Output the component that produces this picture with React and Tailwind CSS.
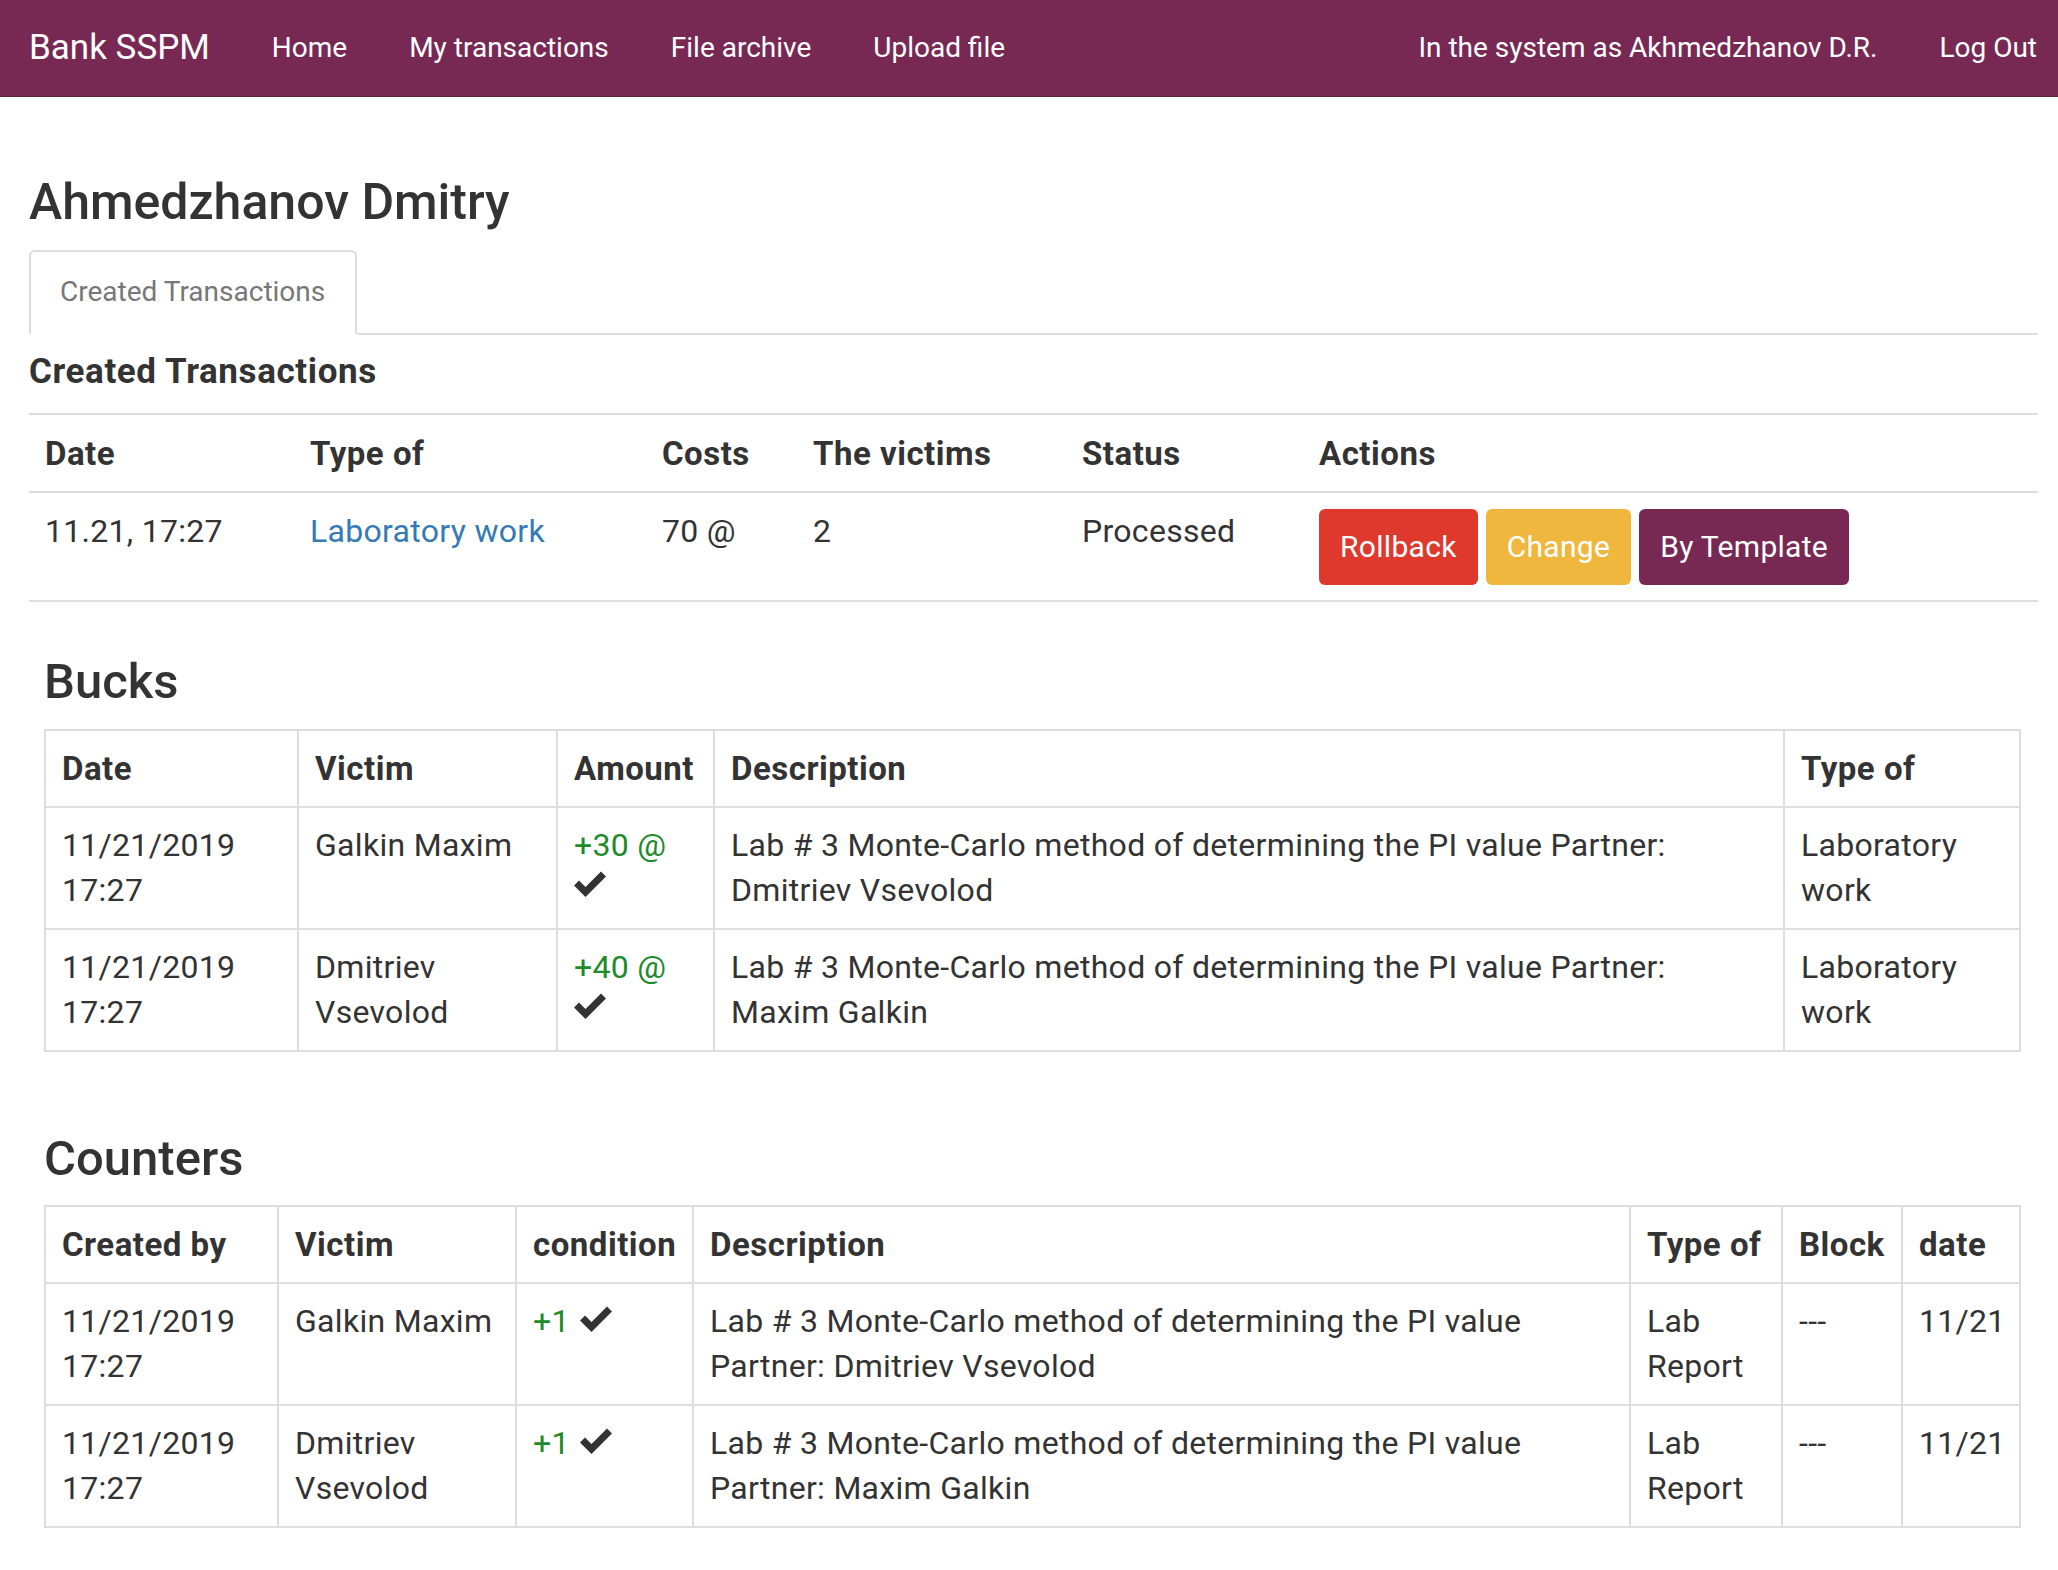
import React from 'react';

// --- small pieces ---

const Check = ({ className = '' }) => (
    <svg viewBox="0 0 32 28" className={`w-[32px] h-[28px] ${className}`} fill="#333333">
        <path d="M0 15.5 L5 10.5 L11.5 17 L27 1.5 L32 6.5 L11.5 27 Z" />
    </svg>
);

const NavLink = ({ children }) => (
    <a href="#" className="text-white text-[28px] leading-[40px] whitespace-nowrap">{children}</a>
);

const Btn = ({ color, children }) => (
    <button className={`${color} text-white text-[30px] leading-[45px] px-[21px] py-[15.5px] rounded-[6px] whitespace-nowrap`}>
        {children}
    </button>
);

const Th = ({ children }) => (
    <th className="text-left align-top font-bold text-[33px] tracking-[0.5px] px-[16px] py-[15px] border-2 border-[#dddddd]">{children}</th>
);

const Td = ({ children }) => (
    <td className="text-left align-top px-[16px] py-[15px] border-2 border-[#dddddd] whitespace-nowrap">{children}</td>
);

const Plus = ({ children }) => <span className="text-[#1e8a2a]">{children}</span>;

// --- data ---

const bucks = [
    { victim: ['Galkin Maxim'], amount: '+30 @', partner: 'Dmitriev Vsevolod' },
    { victim: ['Dmitriev', 'Vsevolod'], amount: '+40 @', partner: 'Maxim Galkin' },
];

const counters = [
    { victim: ['Galkin Maxim'], partner: 'Dmitriev Vsevolod' },
    { victim: ['Dmitriev', 'Vsevolod'], partner: 'Maxim Galkin' },
];

const Lines = ({ items }) => items.map((t, i) => <div key={i}>{t}</div>);

// --- page ---

export default function App() {
    return (
        <div className="min-h-screen bg-white text-[#333333] font-['Roboto','Liberation_Sans',sans-serif]">
            <nav className="h-[97px] bg-[#772953] border-b border-[#5a1e3e] flex items-center pl-[29px] pr-[21px]">
                <a href="#" className="text-white text-[35px] leading-[40px] mr-[62px] whitespace-nowrap">Bank SSPM</a>
                <div className="flex items-center gap-[62px]">
                    <NavLink>Home</NavLink>
                    <NavLink>My transactions</NavLink>
                    <NavLink>File archive</NavLink>
                    <NavLink>Upload file</NavLink>
                </div>
                <div className="ml-auto flex items-center gap-[62px]">
                    <span className="text-white text-[28px] leading-[40px] whitespace-nowrap">In the system as Akhmedzhanov D.R.</span>
                    <NavLink>Log Out</NavLink>
                </div>
            </nav>

            <main className="pl-[29px] pr-[20px]">
                <h2 className="mt-[77px] text-[50px] leading-[57px] font-medium">Ahmedzhanov Dmitry</h2>

                {/* tabs */}
                <div className="mt-[19px] flex border-b-2 border-[#dddddd]">
                    <div className="-mb-[2px] border-2 border-[#dddddd] border-b-white rounded-t-[6px] bg-white pl-[29px] pr-[30px] pt-[20px] pb-[21px] text-[28px] leading-[40px] text-[#777777]">
                        Created Transactions
                    </div>
                </div>

                <h4 className="mt-[19px] text-[35px] leading-[36px] font-bold tracking-[0.6px]">Created Transactions</h4>

                <table className="mt-[23px] w-full table-fixed border-collapse text-[32px] tracking-[0.3px] leading-[45px]">
                    <colgroup>
                        <col className="w-[265px]" />
                        <col className="w-[352px]" />
                        <col className="w-[151px]" />
                        <col className="w-[269px]" />
                        <col className="w-[237px]" />
                        <col />
                    </colgroup>
                    <thead>
                        <tr className="border-y-2 border-[#dddddd]">
                            {['Date', 'Type of', 'Costs', 'The victims', 'Status', 'Actions'].map((h) => (
                                <th key={h} className="text-left font-bold text-[33px] tracking-[0.5px] px-[16px] py-[15.5px]">{h}</th>
                            ))}
                        </tr>
                    </thead>
                    <tbody>
                        <tr className="border-b-2 border-[#dddddd]">
                            <td className="align-top px-[16px] py-[15.5px]">11.21, 17:27</td>
                            <td className="align-top px-[16px] py-[15.5px]">
                                <a href="#" className="text-[#337ab7]">Laboratory work</a>
                            </td>
                            <td className="align-top px-[16px] py-[15.5px]">70 @</td>
                            <td className="align-top px-[16px] py-[15.5px]">2</td>
                            <td className="align-top px-[16px] py-[15.5px]">Processed</td>
                            <td className="align-top px-[16px] py-[15.5px]">
                                <div className="flex gap-[8px]">
                                    <Btn color="bg-[#df382c]">Rollback</Btn>
                                    <Btn color="bg-[#efb73e]">Change</Btn>
                                    <Btn color="bg-[#772953]">By Template</Btn>
                                </div>
                            </td>
                        </tr>
                    </tbody>
                </table>

                {/* bucks */}
                <section className="ml-[15px] mr-[17px]">
                    <h3 className="mt-[53px] text-[49px] leading-[54px] font-medium">Bucks</h3>
                    <table className="mt-[20px] w-full table-fixed border-collapse text-[32px] tracking-[0.3px] leading-[45px]">
                        <colgroup>
                            <col className="w-[253px]" />
                            <col className="w-[259px]" />
                            <col className="w-[157px]" />
                            <col className="w-[1070px]" />
                            <col />
                        </colgroup>
                        <thead>
                            <tr>
                                <Th>Date</Th>
                                <Th>Victim</Th>
                                <Th>Amount</Th>
                                <Th>Description</Th>
                                <Th>Type of</Th>
                            </tr>
                        </thead>
                        <tbody>
                            {bucks.map((r, i) => (
                                <tr key={i}>
                                    <Td><Lines items={['11/21/2019', '17:27']} /></Td>
                                    <Td><Lines items={r.victim} /></Td>
                                    <Td>
                                        <div><Plus>{r.amount}</Plus></div>
                                        <div className="h-[45px] pt-[2px]"><Check /></div>
                                    </Td>
                                    <Td>
                                        <Lines items={['Lab # 3 Monte-Carlo method of determining the PI value Partner:', r.partner]} />
                                    </Td>
                                    <Td><Lines items={['Laboratory', 'work']} /></Td>
                                </tr>
                            ))}
                        </tbody>
                    </table>
                </section>

                {/* counters */}
                <section className="ml-[15px] mr-[17px]">
                    <h3 className="mt-[80px] text-[49px] leading-[54px] font-medium">Counters</h3>
                    <table className="mt-[19px] w-full table-fixed border-collapse text-[32px] tracking-[0.3px] leading-[45px]">
                        <colgroup>
                            <col className="w-[233px]" />
                            <col className="w-[238px]" />
                            <col className="w-[177px]" />
                            <col className="w-[937px]" />
                            <col className="w-[152px]" />
                            <col className="w-[120px]" />
                            <col />
                        </colgroup>
                        <thead>
                            <tr>
                                <Th>Created by</Th>
                                <Th>Victim</Th>
                                <Th>condition</Th>
                                <Th>Description</Th>
                                <Th>Type of</Th>
                                <Th>Block</Th>
                                <Th>date</Th>
                            </tr>
                        </thead>
                        <tbody>
                            {counters.map((r, i) => (
                                <tr key={i}>
                                    <Td><Lines items={['11/21/2019', '17:27']} /></Td>
                                    <Td><Lines items={r.victim} /></Td>
                                    <Td>
                                        <div className="flex items-center h-[45px] gap-[10px]">
                                            <Plus>+1</Plus>
                                            <Check className="-mt-[6px]" />
                                        </div>
                                    </Td>
                                    <Td>
                                        <Lines items={['Lab # 3 Monte-Carlo method of determining the PI value', `Partner: ${r.partner}`]} />
                                    </Td>
                                    <Td><Lines items={['Lab', 'Report']} /></Td>
                                    <Td>---</Td>
                                    <Td>11/21</Td>
                                </tr>
                            ))}
                        </tbody>
                    </table>
                </section>
            </main>
        </div>
    );
}
